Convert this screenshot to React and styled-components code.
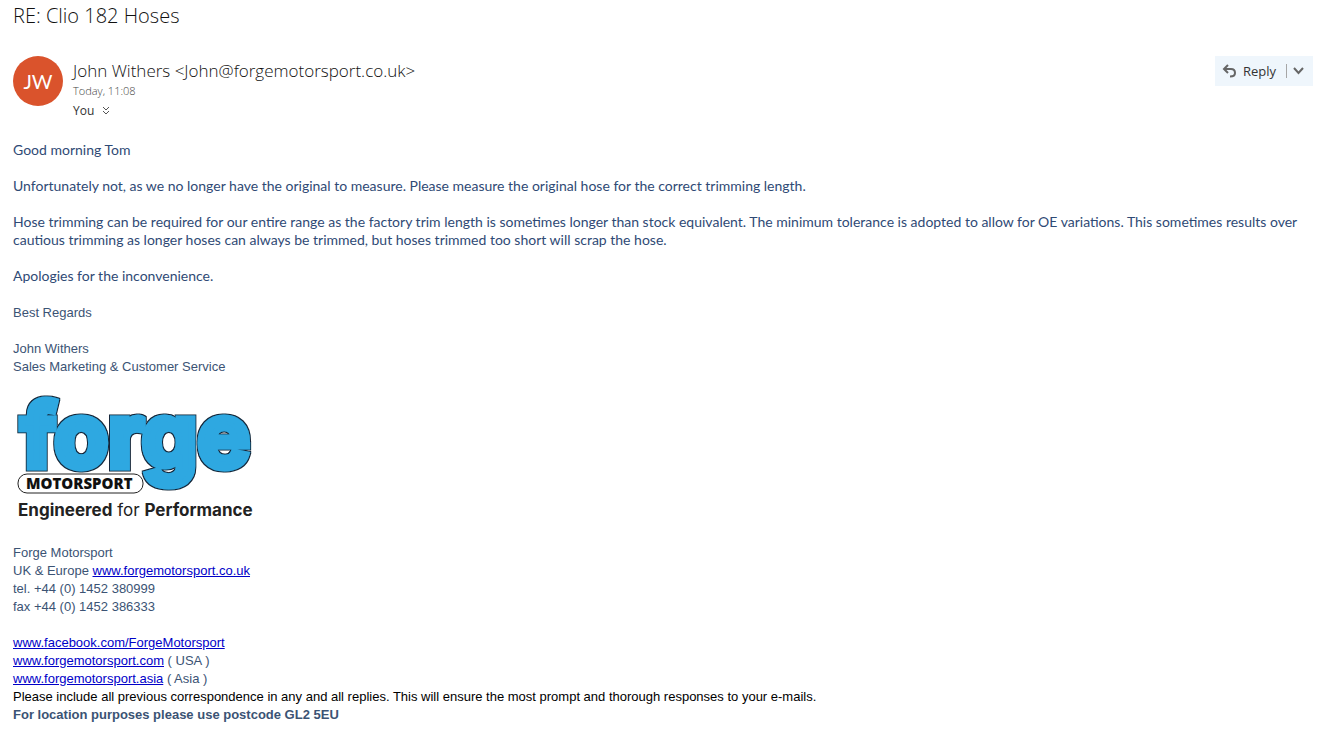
import React from 'react';
import styled, { createGlobalStyle } from 'styled-components';

const GlobalStyle = createGlobalStyle`
    * {
        box-sizing: border-box;
    }

    body {
        margin: 0;
        background-color: #fff;
    }
`;

// **************** STYLED COMPONENTS ****************
const Page = styled.main`
    padding: 0 6px 16px 13px;
    color: #111;
    font-family: "Open Sans", "Noto Sans", sans-serif;
`;

const Subject = styled.h1`
    margin: 0 0 24px;
    font-size: 20px;
    font-weight: 300;
    line-height: 32px;
`;

const MessageHeader = styled.header`
    display: flex;
    align-items: flex-start;
    gap: 10px;
    margin-bottom: 20px;
`;

const Avatar = styled.div`
    display: flex;
    align-items: center;
    justify-content: center;
    flex: none;
    width: 50px;
    height: 50px;
    border-radius: 50%;
    background-color: #da532c;
    color: #fff;
    font-family: Lato, sans-serif;
    font-size: 20px;
`;

const Sender = styled.div`
    flex: 1;
    padding-top: 5px;
`;

const SenderName = styled.div`
    font-size: 17px;
    font-weight: 300;
    line-height: 20px;
`;

const Meta = styled.div`
    display: flex;
    align-items: center;
    gap: 8px;
    color: ${props => props.$dark ? '#333' : '#444'};
    font-size: ${props => props.$dark ? 12 : 11}px;
    font-weight: ${props => props.$dark ? 400 : 300};
    line-height: 20px;
`;

const ReplyGroup = styled.div`
    display: flex;
    align-items: center;
    height: 30px;
    background-color: #eff6fc;
`;

const ToolButton = styled.button`
    display: flex;
    align-items: center;
    gap: 6px;
    height: 100%;
    padding: 0 10px 0 7px;
    border: 0;
    background: none;
    color: #333;
    font-family: inherit;
    font-size: 13px;
    cursor: pointer;
`;

const Divider = styled.span`
    width: 1px;
    height: 14px;
    background-color: #a6a6a6;
`;

const MoreButton = styled(ToolButton)`
    padding: 0 9px 0 6px;
`;

const Body = styled.div`
    color: #2f4a75;
    font-family: Lato, "Noto Sans", sans-serif;
    font-size: 14px;
    line-height: 18px;

    p {
        margin: 0 0 18px;
    }
`;

const Signature = styled.div`
    padding-top: 1px;
    color: #3b5374;
    font-family: "Liberation Sans", Arial, sans-serif;
    font-size: 13px;
    line-height: 18px;

    p {
        margin: 0 0 18px;
    }

    a {
        color: #0000c8;
    }
`;

const Logo = styled.svg`
    display: block;
    overflow: visible;
    margin-bottom: 18px;
`;

const Notice = styled.div`
    color: #000;
`;
// ***************************************************

const ForgeLogo = () => (
    <Logo width="250" height="132" viewBox="0 0 250 132" role="img" aria-label="Forge Motorsport">
        <defs>
            <filter id="outline" x="-5%" y="-10%" width="110%" height="120%">
                <feMorphology in="SourceAlpha" operator="dilate" radius="1" result="grown" />
                <feFlood floodColor="#14283a" />
                <feComposite in2="grown" operator="in" result="edge" />
                <feMerge>
                    <feMergeNode in="edge" />
                    <feMergeNode in="SourceGraphic" />
                </feMerge>
            </filter>
        </defs>
        <text
            x="8"
            y="73"
            fontFamily="Inter, sans-serif"
            fontSize="88"
            fontWeight="700"
            fill="#2fa8e1"
            stroke="#2fa8e1"
            strokeWidth="7"
            filter="url(#outline)"
        >forge</text>
        <rect x="5" y="80" width="125" height="19" rx="9" fill="#fff" stroke="#222" />
        <text x="13" y="95" fontFamily="Open Sans, sans-serif" fontSize="15" fontWeight="800" fill="#111">MOTORSPORT</text>
        <text x="5" y="122" fontFamily="Inter, sans-serif" fontSize="17" fill="#222">
            <tspan fontWeight="700">Engineered</tspan> for <tspan fontWeight="700">Performance</tspan>
        </text>
    </Logo>
);

const ReplyIcon = () => (
    <svg width="15" height="14" viewBox="0 0 15 14" fill="none" stroke="#666" strokeWidth="2" aria-hidden="true">
        <path d="M6 1 L2 5 L6 9" />
        <path d="M2 5 H9 C12 5 13 7 13 9 C13 11 11 12.500 8 12.500" />
    </svg>
);

const App = () => (
    <Page>
        <GlobalStyle />
        <Subject>RE: Clio 182 Hoses</Subject>
        <MessageHeader>
            <Avatar>JW</Avatar>
            <Sender>
                <SenderName>John Withers &lt;John@forgemotorsport.co.uk&gt;</SenderName>
                <Meta>Today, 11:08</Meta>
                <Meta $dark>
                    You
                    <svg width="8" height="10" viewBox="0 0 8 10" fill="none" stroke="#555" aria-hidden="true">
                        <path d="M1 1 L4 4 L7 1 M1 5 L4 8 L7 5" />
                    </svg>
                </Meta>
            </Sender>
            <ReplyGroup>
                <ToolButton type="button"><ReplyIcon />Reply</ToolButton>
                <Divider />
                <MoreButton type="button" aria-label="More reply options">
                    <svg width="11" height="8" viewBox="0 0 11 8" fill="none" stroke="#666" strokeWidth="2" aria-hidden="true">
                        <path d="M1 1 L5.500 6 L10 1" />
                    </svg>
                </MoreButton>
            </ReplyGroup>
        </MessageHeader>
        <Body>
            <p>Good morning Tom</p>
            <p>Unfortunately not, as we no longer have the original to measure. Please measure the original hose for the correct trimming length.</p>
            <p>Hose trimming can be required for our entire range as the factory trim length is sometimes longer than stock equivalent. The minimum tolerance is adopted to allow for OE variations. This sometimes results over cautious trimming as longer hoses can always be trimmed, but hoses trimmed too short will scrap the hose.</p>
            <p>Apologies for the inconvenience.</p>
        </Body>
        <Signature>
            <p>Best Regards</p>
            <p>
                John Withers<br />
                Sales Marketing &amp; Customer Service
            </p>
            <ForgeLogo />
            <p>
                Forge Motorsport<br />
                UK &amp; Europe <a href="http://www.forgemotorsport.co.uk">www.forgemotorsport.co.uk</a><br />
                tel. +44 (0) 1452 380999<br />
                fax +44 (0) 1452 386333
            </p>
            <div><a href="http://www.facebook.com/ForgeMotorsport">www.facebook.com/ForgeMotorsport</a></div>
            <div><a href="http://www.forgemotorsport.com">www.forgemotorsport.com</a> ( USA )</div>
            <div><a href="http://www.forgemotorsport.asia">www.forgemotorsport.asia</a> ( Asia )</div>
            <Notice>Please include all previous correspondence in any and all replies. This will ensure the most prompt and thorough responses to your e-mails.</Notice>
            <strong>For location purposes please use postcode GL2 5EU</strong>
        </Signature>
    </Page>
);

export default App;
